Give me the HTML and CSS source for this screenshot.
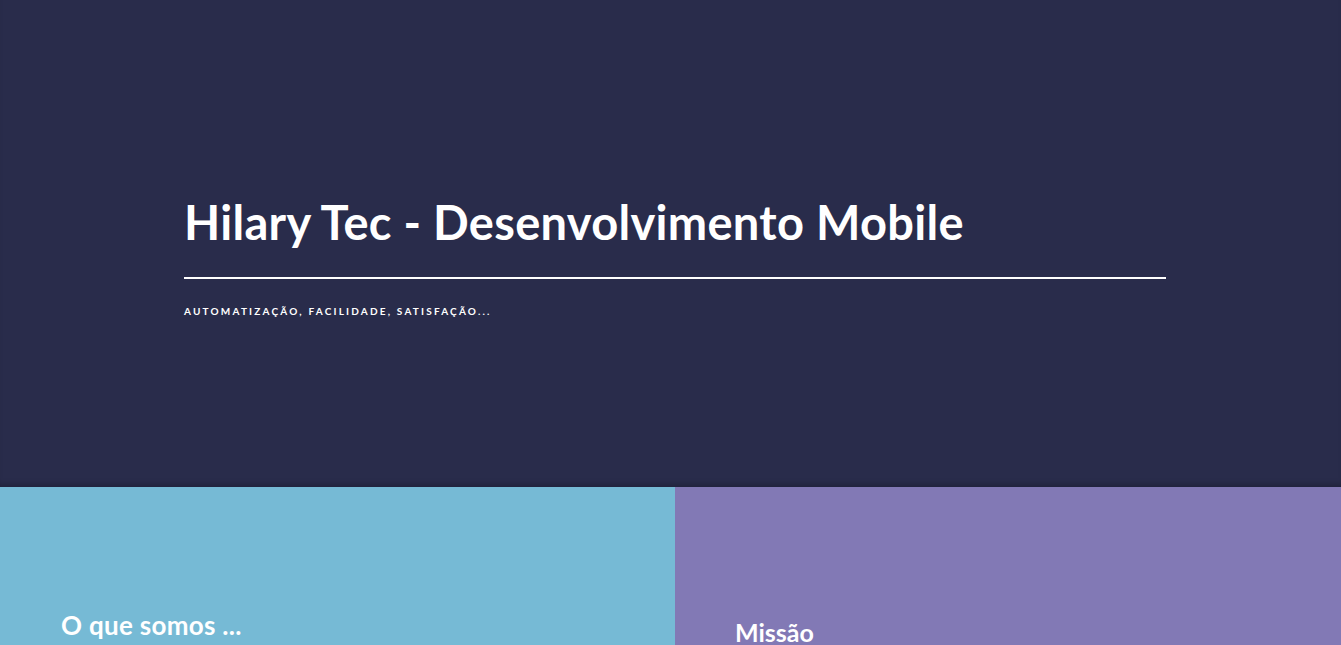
FILE: index.html
```html
<!DOCTYPE html>
<html lang="pt">
<head>
<meta charset="utf-8">
<title>Hilary Tec</title>
<link rel="stylesheet" href="styles.css">
</head>
<body>
<header class="hero">
  <div class="hero-inner">
    <h1 class="hero-title">Hilary Tec - Desenvolvimento Mobile</h1>
    <hr class="hero-rule">
    <p class="hero-sub">Automatização, facilidade, satisfação...</p>
  </div>
</header>
<section class="panels">
  <div class="panel panel-blue">
    <h2 class="panel-title">O que somos ...</h2>
  </div>
  <div class="panel panel-purple">
    <h2 class="panel-title">Missão</h2>
  </div>
</section>
</body>
</html>
```
FILE: styles.css
```css
* { box-sizing: border-box; }
html, body { margin: 0; padding: 0; }
body {
  font-family: "Lato", "Noto Sans", sans-serif;
  color: #fff;
  background: #292c4b;
  overflow: hidden;
}
.hero {
  height: 487px;
  background: #292c4b;
  box-shadow: inset 0 -6px 6px -4px rgba(0,0,0,0.25);
  padding-top: 193px;
}
.hero-inner {
  margin-left: 184px;
  width: 982px;
}
.hero-title {
  margin: 0;
  font-size: 47px;
  font-weight: 700;
  line-height: 58px;
  letter-spacing: 0.3px;
}
.hero-rule {
  margin: 26px 0 0;
  border: 0;
  height: 2px;
  background: #fff;
}
.hero-sub {
  margin: 25px 0 0;
  font-size: 10px;
  font-weight: 700;
  letter-spacing: 2.2px;
  text-transform: uppercase;
  line-height: 14px;
}
.panels {
  display: flex;
  height: 158px;
}
.panel-blue {
  width: 675px;
  background: #76bad5;
  padding: 123px 0 0 61px;
}
.panel-purple {
  flex: 1;
  background: #8279b5;
  padding: 130px 0 0 60px;
}
.panel-title {
  margin: 0;
  font-size: 25px;
  font-weight: 700;
  line-height: 30px;
}
.panel-blue .panel-title {
  font-size: 26px;
  letter-spacing: 0.3px;
}
```
